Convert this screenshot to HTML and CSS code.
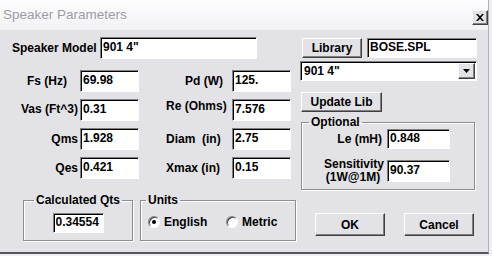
FILE: index.html
```html
<!DOCTYPE html>
<html lang="en">
<head>
    <meta charset="UTF-8">
    <title>Speaker Parameters</title>
    <link rel="stylesheet" href="styles.css">
</head>
<body>
<div class="window">
    <div class="titlebar">
        <span class="title">Speaker Parameters</span>
        <button class="close" type="button">
            <svg width="8" height="7" viewBox="0 0 8 7"><path d="M0 0h2l2 2.2L6 0h2L5 3.5 8 7H6L4 4.8 2 7H0l3-3.5z" fill="#000"/></svg>
        </button>
    </div>
    <div class="client">
        <div class="top">
            <div class="left">
                <div class="model-row">
                    <label>Speaker Model</label>
                    <input class="field model" type="text" value='901 4"'>
                </div>
                <div class="params">
                    <label class="lbl fs">Fs (Hz)</label><input class="field" type="text" value="69.98">
                    <label class="lbl2 pd">Pd (W)</label><input class="field" type="text" value="125.">
                    <label class="lbl vas">Vas (Ft^3)</label><input class="field" type="text" value="0.31">
                    <label class="lbl2 re">Re (Ohms)</label><input class="field" type="text" value="7.576">
                    <label class="lbl">Qms</label><input class="field" type="text" value="1.928">
                    <label class="lbl2">Diam&nbsp; (in)</label><input class="field" type="text" value="2.75">
                    <label class="lbl">Qes</label><input class="field" type="text" value="0.421">
                    <label class="lbl2">Xmax (in)</label><input class="field" type="text" value="0.15">
                </div>
            </div>
            <div class="right">
                <div class="lib-row">
                    <button class="btn lib" type="button">Library</button>
                    <input class="field lib-file" type="text" value="BOSE.SPL">
                </div>
                <div class="combo">
                    <span>901 4"</span>
                    <span class="drop"><svg width="7" height="4" viewBox="0 0 7 4"><path d="M0 0h7L3.5 4z" fill="#000"/></svg></span>
                </div>
                <button class="btn update" type="button">Update Lib</button>
                <fieldset class="group optional">
                    <legend>Optional</legend>
                    <div class="opt-grid">
                        <label>Le (mH)</label><input class="field le" type="text" value="0.848">
                        <label class="sens">Sensitivity<br>(1W@1M)</label><input class="field" type="text" value="90.37">
                    </div>
                </fieldset>
            </div>
        </div>
        <div class="bottom">
            <fieldset class="group qts">
                <legend>Calculated Qts</legend>
                <input class="field" type="text" value="0.34554">
            </fieldset>
            <fieldset class="group units">
                <legend>Units</legend>
                <div class="radios">
                    <label class="radio first"><span class="dot on"></span>English</label>
                    <label class="radio"><span class="dot"></span>Metric</label>
                </div>
            </fieldset>
            <button class="btn ok" type="button">OK</button>
            <button class="btn cancel" type="button">Cancel</button>
        </div>
    </div>
</div>
</body>
</html>
```

FILE: styles.css
```css
html { background: #f0f0f4; }
body {
    margin: 0;
    font: bold 12px "Liberation Sans", Arial, sans-serif;
    color: #000;
}
.window {
    width: 488px; height: 252px;
    background: #e2e2e7;
    border-right: 1px solid #b0b0b8;
    border-bottom: 2px solid #55555c;
    box-shadow: 0 2px 0 #8e8e96;
}
.titlebar {
    height: 30px;
    display: flex; justify-content: space-between; align-items: flex-start;
    background: linear-gradient(#fdfdfe, #f2f2f6);
}
.title {
    padding: 7px 0 0 3px;
    font-weight: normal; font-size: 13.5px;
    color: #9c9ca8;
}
.close {
    width: 16px; height: 15px; margin-top: 10px;
    padding: 0;
    display: flex; align-items: center; justify-content: center;
    background: #e2e2e7;
    border: 1px solid; border-color: #fff #404040 #404040 #fff;
    box-shadow: inset -1px -1px #808080;
}

.client { padding: 7px 0 0 12px; }
.top { display: flex; }
.left { width: 279px; }

.field {
    box-sizing: border-box;
    height: 22px; margin: 0;
    padding: 0 2px 3px;
    border: 1px solid; border-color: #808080 #fff #fff #808080;
    box-shadow: inset 1px 1px #000;
    background: #fff;
    font: inherit; color: #000;
    outline: none;
}
.btn {
    box-sizing: border-box;
    height: 20px; padding: 0;
    background: #e2e2e7;
    border: 1px solid; border-color: #fff #404040 #404040 #fff;
    box-shadow: inset -1px -1px #808080;
    font: inherit; color: #000;
}

.model-row { display: flex; align-items: center; }
.model-row label { width: 88px; }
.field.model { width: 157px; }

.params {
    display: grid;
    grid-template-columns: 68px 59px 93px 59px;
    grid-auto-rows: 22px;
    row-gap: 7px;
    align-items: center;
    margin-top: 11px;
}
.params .field { width: 59px; }
.lbl { text-align: right; padding-right: 2px; }
.lbl.fs { padding-right: 13px; }
.lbl.vas { align-self: start; padding-top: 3px; }
.lbl2 { padding-left: 27px; }
.lbl2.pd { padding-left: 46px; }
.lbl2.re { align-self: start; }

.right { width: 177px; margin-left: 9px; }
.lib-row { display: flex; margin-top: 1px; }
.btn.lib { width: 60px; margin-left: 2px; }
.field.lib-file { width: 110px; height: 20px; margin-left: 5px; }
.combo {
    box-sizing: border-box;
    height: 20px; margin-top: 3px;
    display: flex; align-items: center; justify-content: space-between;
    padding-left: 3px;
    border: 1px solid; border-color: #808080 #fff #fff #808080;
    box-shadow: inset 1px 1px #000;
    background: #fff;
}
.drop {
    box-sizing: border-box;
    width: 17px; height: 16px; margin-right: 1px;
    display: flex; align-items: center; justify-content: center;
    background: #e2e2e7;
    border: 1px solid; border-color: #fff #404040 #404040 #fff;
    box-shadow: inset -1px -1px #808080;
}
.btn.update { display: block; width: 81px; margin: 11px 0 0 1px; }

.group {
    box-sizing: border-box;
    margin: 0; padding: 0;
    min-inline-size: 0;
    border: 1px solid #8c8c94;
    box-shadow: inset 1px 1px #fff, 1px 1px #fff;
}
.group legend { padding: 0 2px; line-height: 14px; }
.optional { width: 174px; height: 75px; margin: 3px 0 0 1px; }
.optional legend { margin-left: 7px; }
.opt-grid {
    display: grid;
    grid-template-columns: 80px 63px;
    column-gap: 5px; row-gap: 9px;
    align-items: center;
}
.opt-grid label { text-align: right; }
.field.le { height: 20px; }
.opt-grid .sens { text-align: center; padding-left: 22px; line-height: 13px; }

.bottom { display: flex; align-items: flex-start; margin: 3px 0 0 11px; }
.qts { width: 110px; height: 48px; }
.qts legend { margin: 0 auto; }
.qts .field { display: block; width: 51px; height: 20px; margin: 6px auto 0; }
.units { width: 156px; height: 48px; margin-left: 7px; }
.units legend { margin-left: 5px; }
.radios { display: flex; padding: 8px 0 0 7px; }
.radio { display: flex; align-items: center; gap: 4px; }
.radio.first { width: 78px; }
.dot {
    box-sizing: border-box;
    width: 12px; height: 12px;
    border-radius: 50%;
    border: 1px solid; border-color: #808080 #fff #fff #808080;
    box-shadow: inset 1px 1px #404040;
    background: #fff;
    display: flex; align-items: center; justify-content: center;
}
.dot.on::after {
    content: ""; width: 4px; height: 4px; border-radius: 50%;
    background: #000;
}
.btn.ok { width: 70px; height: 23px; margin: 20px 0 0 19px; }
.btn.cancel { width: 70px; height: 23px; margin: 20px 0 0 19px; }
```
